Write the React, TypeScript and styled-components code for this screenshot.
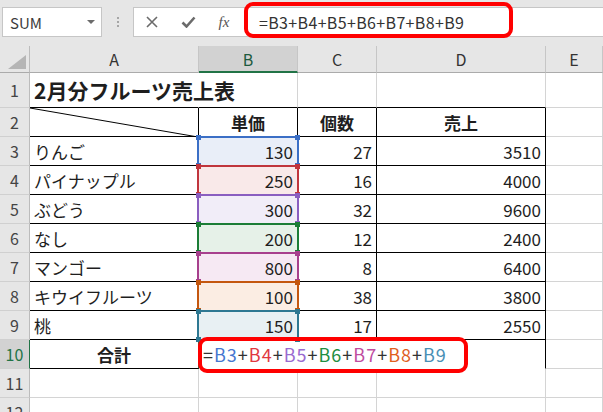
import React from "react";
import styled, { createGlobalStyle } from "styled-components";

type Line = "grid" | "black" | "none" | "green";

const lineColor = (l: Line) =>
  l === "black" ? "#000" : l === "green" ? "#217346" : l === "none" ? "transparent" : "#d4d4d4";

const fruits = [
  { name: "りんご", price: 130, qty: 27, sales: 3510, ref: "B3", line: "#3b6fc6", fill: "#e9eef8", ink: "#4677d0" },
  { name: "パイナップル", price: 250, qty: 16, sales: 4000, ref: "B4", line: "#c0353d", fill: "#f9e9e9", ink: "#e0383f" },
  { name: "ぶどう", price: 300, qty: 32, sales: 9600, ref: "B5", line: "#8a5ec0", fill: "#f1edf8", ink: "#9a6bd0" },
  { name: "なし", price: 200, qty: 12, sales: 2400, ref: "B6", line: "#1b7d36", fill: "#e6f1e8", ink: "#1f8f42" },
  { name: "マンゴー", price: 800, qty: 8, sales: 6400, ref: "B7", line: "#a7408d", fill: "#f6e9f3", ink: "#c04c9f" },
  { name: "キウイフルーツ", price: 100, qty: 38, sales: 3800, ref: "B8", line: "#c4570f", fill: "#fbede3", ink: "#e0601f" },
  { name: "桃", price: 150, qty: 17, sales: 2550, ref: "B9", line: "#2e7892", fill: "#e8f0f3", ink: "#4a8fb5" },
];

const columns = ["A", "B", "C", "D", "E"];

export default function App() {
  return (
    <>
      <GlobalStyle />
      <StyledWindow>
        <StyledFormulaBar>
          <StyledNameBox>
            SUM
            <StyledCaret />
          </StyledNameBox>
          <StyledGrip>
            <StyledDot />
            <StyledDot />
            <StyledDot />
          </StyledGrip>
          <StyledFormulaBox>
            <StyledToolButton>
              <svg width="12" height="12" viewBox="0 0 12 12">
                <path d="M1 1 L11 11 M11 1 L1 11" stroke="#6b6b6b" strokeWidth="1.6" fill="none" />
              </svg>
            </StyledToolButton>
            <StyledToolButton>
              <svg width="15" height="12" viewBox="0 0 15 12">
                <path d="M1.5 6.5 L5.5 10.5 L13.5 1.5" stroke="#6b6b6b" strokeWidth="2.6" fill="none" />
              </svg>
            </StyledToolButton>
            <StyledToolButton>
              <StyledFx>fx</StyledFx>
            </StyledToolButton>
            <StyledFormulaText>=B3+B4+B5+B6+B7+B8+B9</StyledFormulaText>
          </StyledFormulaBox>
          <StyledTopFrame />
        </StyledFormulaBar>

        <StyledSheet>
          <StyledCorner>
            <svg width="18" height="14" viewBox="0 0 18 14">
              <polygon points="18,0 18,14 0,14" fill="#b5b5b5" />
            </svg>
          </StyledCorner>
          {columns.map((c) => (
            <StyledColHead key={c} $active={c === "B"}>
              {c}
            </StyledColHead>
          ))}

          <StyledRowHead>1</StyledRowHead>
          <StyledCell $r="none" $b="black" $bold $size={21}>
            2月分フルーツ売上表
          </StyledCell>
          <StyledCell $r="grid" $b="black" />
          <StyledCell $r="grid" $b="black" />
          <StyledCell $r="grid" $b="black" />
          <StyledCell $r="grid" $b="grid" />

          <StyledRowHead>2</StyledRowHead>
          <StyledDiagonalCell $r="black" $b="black">
            <StyledDiagonal preserveAspectRatio="none" viewBox="0 0 100 100">
              <line x1="0" y1="0" x2="100" y2="100" stroke="#000" strokeWidth="1" vectorEffect="non-scaling-stroke" />
            </StyledDiagonal>
          </StyledDiagonalCell>
          <StyledCell $r="black" $b="black" $align="center" $bold>
            単価
          </StyledCell>
          <StyledCell $r="black" $b="black" $align="center" $bold>
            個数
          </StyledCell>
          <StyledCell $r="black" $b="black" $align="center" $bold>
            売上
          </StyledCell>
          <StyledCell $r="grid" $b="grid" />

          {fruits.map((f, i) => (
            <React.Fragment key={f.ref}>
              <StyledRowHead>{i + 3}</StyledRowHead>
              <StyledCell $r="black" $b="black">
                {f.name}
              </StyledCell>
              <StyledRangeCell $r="black" $b="black" $align="right" $fill={f.fill}>
                {f.price}
                <StyledRangeMark $color={f.line}>
                  <StyledHandle $color={f.line} $v="top" $h="left" />
                  <StyledHandle $color={f.line} $v="top" $h="right" />
                  <StyledHandle $color={f.line} $v="bottom" $h="left" />
                  <StyledHandle $color={f.line} $v="bottom" $h="right" />
                </StyledRangeMark>
              </StyledRangeCell>
              <StyledCell $r="black" $b="black" $align="right">
                {f.qty}
              </StyledCell>
              <StyledCell $r="black" $b="black" $align="right">
                {f.sales}
              </StyledCell>
              <StyledCell $r="grid" $b="grid" />
            </React.Fragment>
          ))}

          <StyledRowHead $active>10</StyledRowHead>
          <StyledCell $r="green" $b="black" $align="center" $bold>
            合計
          </StyledCell>
          <StyledRangeCell $r="none" $b="none">
            <StyledPart>=</StyledPart>
            {fruits.map((f, i) => (
              <React.Fragment key={f.ref}>
                {i > 0 && <StyledPart>+</StyledPart>}
                <StyledPart $color={f.ink}>{f.ref}</StyledPart>
              </React.Fragment>
            ))}
            <StyledCellFrame />
          </StyledRangeCell>
          <StyledCell $r="none" $b="none" />
          <StyledCell $r="black" $b="none" />
          <StyledCell $r="grid" $b="grid" />

          {[11, 12].map((n) => (
            <React.Fragment key={n}>
              <StyledRowHead>{n}</StyledRowHead>
              <StyledCell $r="grid" $b="grid" />
              <StyledCell $r="grid" $b="grid" />
              <StyledCell $r="grid" $b="grid" />
              <StyledCell $r="grid" $b="grid" />
              <StyledCell $r="grid" $b="grid" />
            </React.Fragment>
          ))}
        </StyledSheet>
      </StyledWindow>
    </>
  );
}

const GlobalStyle = createGlobalStyle`
  html, body {
    margin: 0;
    padding: 0;
    background: #fff;
  }
`;

const StyledWindow = styled.div`
  width: 603px;
  height: 412px;
  overflow: hidden;
  background: #fff;
  font-family: "Noto Sans CJK JP", "Noto Sans", sans-serif;
  color: #1e1e1e;
`;

const StyledFormulaBar = styled.div`
  position: relative;
  height: 46px;
  box-sizing: border-box;
  padding: 7px 0 0 2px;
  background: #e6e6e6;
  display: flex;
  align-items: flex-start;
`;

const StyledNameBox = styled.div`
  box-sizing: border-box;
  width: 100px;
  height: 30px;
  border: 1px solid #c6c6c6;
  background: #fff;
  display: flex;
  align-items: center;
  padding: 0 6px 0 7px;
  font-size: 15px;
  color: #3c3c3c;
`;

const StyledCaret = styled.span`
  margin-left: auto;
  width: 0;
  height: 0;
  border-left: 4px solid transparent;
  border-right: 4px solid transparent;
  border-top: 4px solid #6b6b6b;
`;

const StyledGrip = styled.div`
  width: 31px;
  height: 30px;
  display: flex;
  flex-direction: column;
  align-items: center;
  justify-content: center;
  gap: 2px;
`;

const StyledDot = styled.span`
  width: 2px;
  height: 2px;
  background: #a6a6a6;
`;

const StyledFormulaBox = styled.div`
  flex: 1;
  box-sizing: border-box;
  height: 30px;
  border: 1px solid #c6c6c6;
  border-right: none;
  background: #fff;
  display: flex;
  align-items: center;
`;

const StyledToolButton = styled.div`
  width: 36px;
  display: flex;
  justify-content: center;
  align-items: center;
`;

const StyledFx = styled.span`
  font-family: "Liberation Serif", "DejaVu Serif", serif;
  font-style: italic;
  font-size: 15px;
  color: #555;
`;

const StyledFormulaText = styled.div`
  padding-left: 17px;
  font-size: 16px;
  letter-spacing: 0.35px;
  color: #333;
  white-space: nowrap;
`;

const StyledRedFrame = styled.div`
  position: absolute;
  box-sizing: border-box;
  border: 4px solid #ff0000;
  border-radius: 9px;
  pointer-events: none;
`;

const StyledTopFrame = styled(StyledRedFrame)`
  left: 244px;
  top: 2px;
  width: 269px;
  height: 36px;
`;

const StyledCellFrame = styled(StyledRedFrame)`
  left: -1px;
  top: -3px;
  width: 270px;
  height: 36px;
`;

const StyledSheet = styled.div`
  display: grid;
  grid-template-columns: 30px 169px 99px 79px 169px 57px;
  grid-template-rows: 27px 35px repeat(11, 29px);
`;

const StyledCorner = styled.div`
  box-sizing: border-box;
  background: #e6e6e6;
  border-right: 1px solid #bcbcbc;
  border-bottom: 1px solid #ababab;
  display: flex;
  justify-content: flex-end;
  align-items: flex-end;
  padding: 0 3px 3px 0;
`;

const StyledColHead = styled.div<{ $active?: boolean }>`
  box-sizing: border-box;
  background: ${(p) => (p.$active ? "#d2d2d2" : "#e6e6e6")};
  border-right: 1px solid #c6c6c6;
  border-bottom: ${(p) => (p.$active ? "2px solid #217346" : "1px solid #ababab")};
  display: flex;
  align-items: center;
  justify-content: center;
  font-size: 16px;
  color: ${(p) => (p.$active ? "#1d5a3e" : "#333")};
`;

const StyledRowHead = styled.div<{ $active?: boolean }>`
  box-sizing: border-box;
  background: ${(p) => (p.$active ? "#d2d2d2" : "#e6e6e6")};
  border-right: 1px solid ${(p) => (p.$active ? "#217346" : "#bcbcbc")};
  border-bottom: 1px solid #d0d0d0;
  display: flex;
  align-items: center;
  justify-content: center;
  font-size: 16px;
  color: ${(p) => (p.$active ? "#217346" : "#444")};
`;

const StyledCell = styled.div<{
  $r: Line;
  $b: Line;
  $align?: "left" | "right" | "center";
  $bold?: boolean;
  $size?: number;
  $fill?: string;
}>`
  box-sizing: border-box;
  min-width: 0;
  border-right: 1px solid ${(p) => lineColor(p.$r)};
  border-bottom: 1px solid ${(p) => lineColor(p.$b)};
  background: ${(p) => p.$fill ?? "transparent"};
  display: flex;
  align-items: center;
  justify-content: ${(p) =>
    p.$align === "right" ? "flex-end" : p.$align === "center" ? "center" : "flex-start"};
  padding: 0 4px 0 4px;
  font-size: ${(p) => p.$size ?? 17}px;
  font-weight: ${(p) => (p.$bold ? 700 : 400)};
  white-space: nowrap;
`;

const StyledRangeCell = styled(StyledCell)`
  position: relative;
`;

const StyledDiagonalCell = styled(StyledCell)`
  position: relative;
`;

const StyledDiagonal = styled.svg`
  position: absolute;
  left: 0;
  top: 0;
  width: 100%;
  height: calc(100% + 1px);
`;

const StyledRangeMark = styled.div<{ $color: string }>`
  position: absolute;
  inset: -1px -2px -2px -2px;
  box-shadow: inset 0 0 0 2px ${(p) => p.$color};
`;

const StyledHandle = styled.span<{ $color: string; $v: "top" | "bottom"; $h: "left" | "right" }>`
  position: absolute;
  width: 5px;
  height: 5px;
  background: ${(p) => p.$color};
  ${(p) => p.$v}: -1px;
  ${(p) => p.$h}: -1px;
`;

const StyledPart = styled.span<{ $color?: string }>`
  font-size: 18px;
  letter-spacing: 1px;
  color: ${(p) => p.$color ?? "#333"};
`;
